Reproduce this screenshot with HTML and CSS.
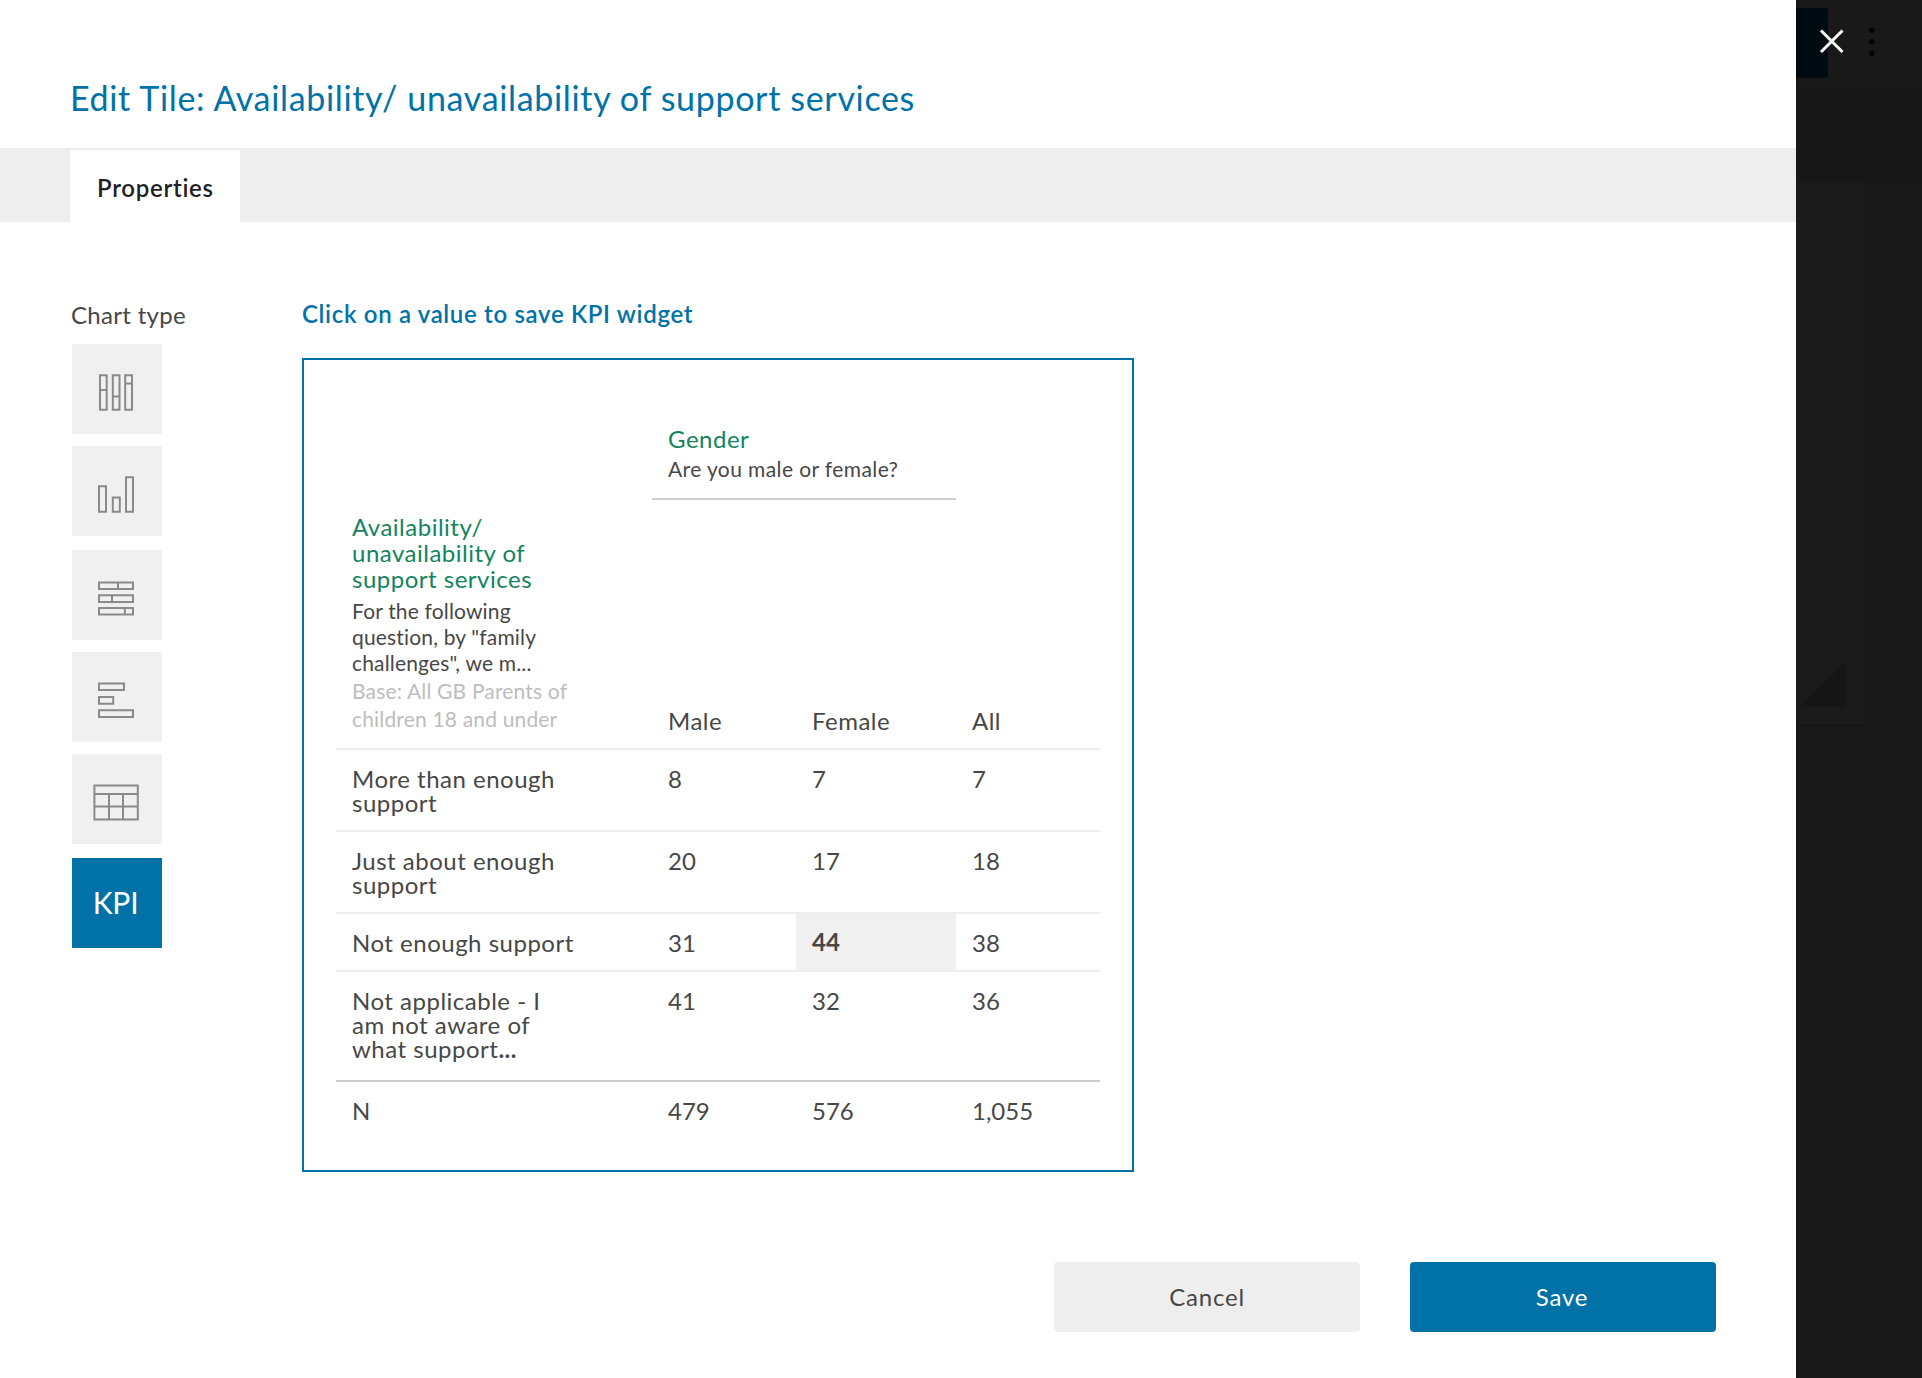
FILE: index.html
```
<!DOCTYPE html>
<html lang="en">
<head>
<meta charset="utf-8">
<title>Edit Tile</title>
<link rel="stylesheet" href="styles.css">
</head>
<body>
<div class="screen">
  <main class="modal">
    <header class="modal-header">
      <h1 class="title">Edit Tile: Availability/ unavailability of support services</h1>
    </header>
    <nav class="tabs"><a class="tab">Properties</a></nav>
    <div class="content">
      <aside class="types">
        <h2 class="types-label">Chart type</h2>
        <button class="type" aria-label="Stacked columns">
          <svg viewBox="0 0 90 90"><path d="M28 31.2h6.7v34.5H28zM40.8 31.2h6.7v34.5h-6.7zM53.2 31.2H60v34.5h-6.8zM28 46h6.7M40.8 52.4h6.7M53.2 39.4H60"/></svg>
        </button>
        <button class="type" aria-label="Columns">
          <svg viewBox="0 0 90 90"><path d="M27 40.2h7v25.5h-7zM40.8 51.4h7v14.3h-7zM54 31.2h7v34.5h-7z"/></svg>
        </button>
        <button class="type type-wide" aria-label="Stacked bars">
          <svg viewBox="0 0 90 90"><path d="M27 32.4h34V39H27zM27 45.2h34v6.7H27zM27 58h34v6.5H27zM46 32.4V39M40 45.2v6.7M52.8 58v6.5"/></svg>
        </button>
        <button class="type" aria-label="Bars">
          <svg viewBox="0 0 90 90"><path d="M27 31.4h25V38H27zM27 45h14.2v6.8H27zM27 58.3h34V65H27z"/></svg>
        </button>
        <button class="type" aria-label="Table">
          <svg viewBox="0 0 90 90"><path d="M22.4 31.4h43.4v34H22.4zM22.4 40h43.4M22.4 52.6h43.4M37 40v25.4M51 40v25.4"/></svg>
        </button>
        <button class="type type-wide active">KPI</button>
      </aside>
      <section class="picker">
        <h2 class="hint">Click on a value to save KPI widget</h2>
        <div class="card">
          <table class="grid">
            <colgroup><col class="col-label"><col class="col-male"><col class="col-female"><col class="col-all"></colgroup>
            <thead>
              <tr class="question-row">
                <td></td>
                <th colspan="2" class="question">
                  <div class="q-title">Gender</div>
                  <div class="q-text">Are you male or female?</div>
                </th>
                <td></td>
              </tr>
              <tr class="head-row">
                <th class="row-question">
                  <div class="rq-title">Availability/<br>unavailability of<br>support services</div>
                  <div class="rq-text">For the following<br>question, by "family<br>challenges", we m...</div>
                  <div class="rq-base">Base: All GB Parents of<br>children 18 and under</div>
                </th>
                <th class="answer">Male</th><th class="answer">Female</th><th class="answer">All</th>
              </tr>
            </thead>
            <tbody>
              <tr class="two"><th>More than enough<br>support</th><td>8</td><td>7</td><td>7</td></tr>
              <tr class="two"><th>Just about enough<br>support</th><td>20</td><td>17</td><td>18</td></tr>
              <tr class="one"><th>Not enough support</th><td>31</td><td class="selected">44</td><td>38</td></tr>
              <tr class="three"><th>Not applicable - I<br>am not aware of<br>what support<b>...</b></th><td>41</td><td>32</td><td>36</td></tr>
              <tr class="total"><th>N</th><td>479</td><td>576</td><td>1,055</td></tr>
            </tbody>
          </table>
        </div>
      </section>
    </div>
    <footer class="actions">
      <button class="btn cancel">Cancel</button>
      <button class="btn save">Save</button>
    </footer>
  </main>
  <aside class="backdrop">
    <svg class="backdrop-art" viewBox="0 0 126 1378">
      <path fill="#171717" d="M0 88h126v94H0z"/>
      <path fill="#1a1a1a" d="M0 182h68v542H0z"/>
      <path fill="#161616" d="M0 724h68v1.2H0zM68 182h1v543h-1z"/>
      <path fill="#151515" d="M4 707l46-45v45z"/>
      <path fill="#000b11" d="M0 8h29a3 3 0 0 1 3 3v64a3 3 0 0 1-3 3H0z"/>
      <g fill="#050505"><circle cx="75.7" cy="30" r="2.8"/><circle cx="75.7" cy="41.7" r="2.8"/><circle cx="75.7" cy="53.3" r="2.8"/></g>
      <path class="close" d="M25 30.500l21.500 21.500M46.500 30.500l-21.500 21.500"/>
    </svg>
  </aside>
</div>
</body>
</html>
```
FILE: styles.css
```
* { box-sizing: border-box; }
body {
  margin: 0;
  background: #fff;
  color: #474747;
  font: 400 24px/24px Lato, "Open Sans", sans-serif;
  letter-spacing: 0.5px;
}
h1, h2 { margin: 0; }
button { border: 0; padding: 0; font: inherit; letter-spacing: inherit; }

.screen { display: flex; width: 1922px; height: 1378px; overflow: hidden; }
.modal { width: 1796px; display: flex; flex-direction: column; }

.modal-header { height: 148px; padding: 78px 0 0 70px; }
.title { font-size: 34px; line-height: 40px; font-weight: 400; letter-spacing: 0.66px; color: #0072a8; }

.tabs { height: 74px; padding: 2px 0 0 70px; background: #eee; display: flex; }
.tab {
  width: 170px;
  padding: 26px 0 0 27px;
  background: #fff;
  color: #1f1f27;
  font-weight: 600;
  letter-spacing: 0.7px;
}

.content { display: flex; padding-left: 72px; height: 1040px; }
.types { width: 230px; padding-top: 81px; display: flex; flex-direction: column; }
.types-label { font-size: 24px; font-weight: 400; letter-spacing: 0.3px; margin: 0 0 17px -1px; }
.type { width: 90px; height: 90px; flex: none; background: #f0f0f0; margin-bottom: 12px; }
.type:has(+ .type-wide) { margin-bottom: 14px; }
.type svg { display: block; width: 90px; height: 90px; fill: none; stroke: #8a8a8a; stroke-width: 2; }
.type.active { background: #0072a8; color: #fff; font-size: 30px; letter-spacing: -0.2px; padding: 0 3px 2px 0; }

.picker { width: 832px; padding-top: 80px; }
.hint { font-size: 24px; font-weight: 600; letter-spacing: 0.67px; color: #0072a8; margin-bottom: 32px; }
.card { height: 814px; border: 2px solid #0072a8; padding: 64px 0 0 32px; }

.grid { width: 764px; table-layout: fixed; border-collapse: separate; border-spacing: 0; }
.col-label { width: 316px; }
.col-male { width: 144px; }
.col-female { width: 160px; }
.col-all { width: 144px; }
.grid th, .grid td { padding: 0 0 0 16px; vertical-align: top; text-align: left; font-weight: 400; }
.grid td { letter-spacing: 0; }

.question-row { height: 76px; }
.grid .question { border-bottom: 2px solid #d0d0d0; padding-top: 3px; }
.q-title, .rq-title { color: #13845f; }
.q-text { font-size: 21px; line-height: 26px; letter-spacing: 0.4px; margin-top: 5px; }

.head-row { height: 250px; }
.grid .row-question { padding-top: 14px; border-bottom: 2px solid #eee; }
.rq-title { line-height: 26px; }
.rq-text, .rq-base { font-size: 21px; letter-spacing: 0.17px; }
.rq-text { line-height: 26px; margin-top: 6px; }
.rq-base { line-height: 28px; padding-top: 1px; color: #bdbdbd; }
.grid .answer { vertical-align: bottom; padding-bottom: 15px; border-bottom: 2px solid #eee; }

.grid tbody th, .grid tbody td { padding-top: 17px; border-bottom: 2px solid #eee; }
.two { height: 82px; }
.one { height: 58px; }
.three { height: 110px; }
.total { height: 60px; }
.grid .three th, .grid .three td { border-bottom-color: #ccc; }
.grid .total th, .grid .total td { border-bottom: 0; }
.grid tbody .selected { background: #f0f0f0; font-weight: 700; padding-top: 16px; }

.actions { display: flex; gap: 50px; padding-left: 1054px; }
.btn { width: 306px; height: 70px; border-radius: 4px; background: #eee; color: #474747; letter-spacing: 0.8px; }
.btn.save { background: #0072a8; color: #fff; padding-right: 2px; }

.backdrop { width: 126px; background: #191919; }
.backdrop-art { display: block; width: 126px; height: 1378px; }
.close { fill: none; stroke: #fff; stroke-width: 3; }
```
